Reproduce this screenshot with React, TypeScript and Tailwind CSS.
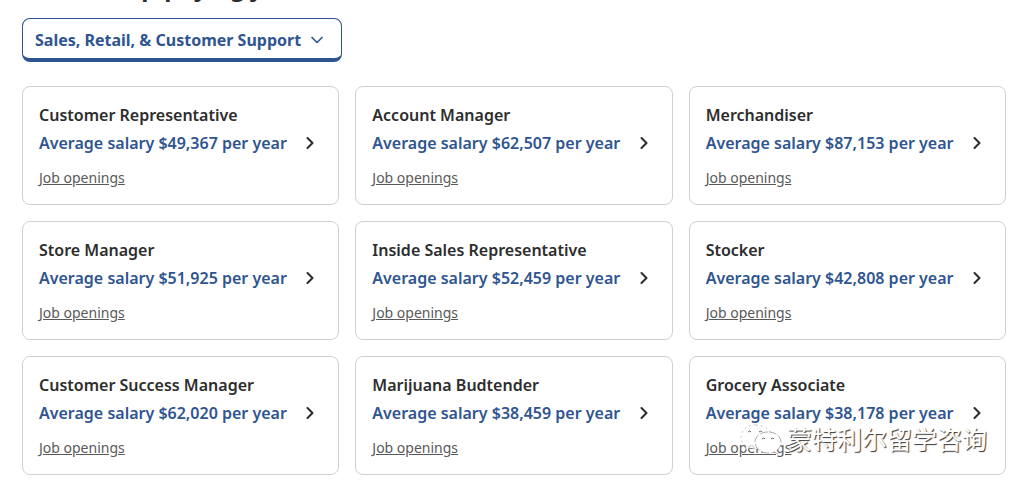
import { ChevronDown, ChevronRight } from "lucide-react";

type Job = {
  title: string;
  salary: string;
};

const jobs: Job[] = [
  { title: "Customer Representative", salary: "$49,367" },
  { title: "Account Manager", salary: "$62,507" },
  { title: "Merchandiser", salary: "$87,153" },
  { title: "Store Manager", salary: "$51,925" },
  { title: "Inside Sales Representative", salary: "$52,459" },
  { title: "Stocker", salary: "$42,808" },
  { title: "Customer Success Manager", salary: "$62,020" },
  { title: "Marijuana Budtender", salary: "$38,459" },
  { title: "Grocery Associate", salary: "$38,178" },
];

function JobCard({ title, salary }: Job) {
  return (
    <li className="rounded-lg border border-[#d0d0d0] px-4 pt-[14px] pb-[14px]">
      <a href="#salary" className="flex items-end justify-between pr-[2px]">
        <span>
          <span className="block text-base leading-7 font-semibold text-[#2d2d2d]">
            {title}
          </span>
          <span className="block text-base leading-7 font-semibold text-[#2f5590]">
            Average salary {salary} per year
          </span>
        </span>
        <ChevronRight
          className="mb-1 size-5 text-[#2d2d2d]"
          strokeWidth={2.5}
        />
      </a>
      <a
        href="#openings"
        className="mt-[9px] block w-fit text-sm leading-6 text-[#595959] underline"
      >
        Job openings
      </a>
    </li>
  );
}

function Watermark() {
  return (
    <div className="pointer-events-none absolute right-[34px] bottom-8 flex items-center gap-1">
      <svg
        className="h-8 w-11"
        viewBox="0 0 44 32"
        fill="white"
        stroke="#8a8a8a"
        strokeWidth="0.7"
      >
        <path
          d="M17 2C8 2 2 7 2 14c0 4 2 7 5 9l-1 4 5-2c3 1 6 1 9 1 8-1 13-6 13-12S26 2 17 2Z"
          fillOpacity="0.7"
          stroke="#b0b0b0"
          strokeDasharray="2 3"
        />
        <path
          d="M29 9c-8 0-13 5-13 10s5 11 13 11c2 0 4 0 6-1l4 2-1-4c3-2 4-5 4-8 0-5-5-10-13-10Z"
          strokeDasharray="8 2"
        />
        <path
          d="M9 9q2-2 3 0M20 9q2-2 3 0M23 16q2-2 3 0M32 16q2-2 3 0"
          fill="none"
          stroke="#666"
          strokeWidth="1"
        />
      </svg>
      <span className="text-[25px] leading-8 text-white [text-shadow:1px_1px_1px_#333]">
        蒙特利尔留学咨询
      </span>
    </div>
  );
}

export default function App() {
  return (
    <main className="relative overflow-hidden bg-white pr-[15px] pb-3 pl-[22px] font-['Noto_Sans','Noto_Sans_CJK_SC',sans-serif]">
      <h2 className="-mt-[31px] text-2xl leading-9 font-bold text-[#2d2d2d]">
        Browse top-paying jobs
      </h2>
      <div className="relative mt-[13px] w-80">
        <select
          aria-label="Job category"
          className="block h-11 w-full appearance-none rounded-lg border border-b-4 border-[#2f5590] bg-white pt-[2px] pl-3 text-base font-bold text-[#2f5590]"
        >
          <option>Sales, Retail, &amp; Customer Support</option>
        </select>
        <ChevronDown className="pointer-events-none absolute top-3 right-[15px] size-5 text-[#2f5590]" />
      </div>
      <ul className="mt-6 grid grid-cols-3 gap-4">
        {jobs.map((job) => (
          <JobCard key={job.title} {...job} />
        ))}
      </ul>
      <Watermark />
    </main>
  );
}
